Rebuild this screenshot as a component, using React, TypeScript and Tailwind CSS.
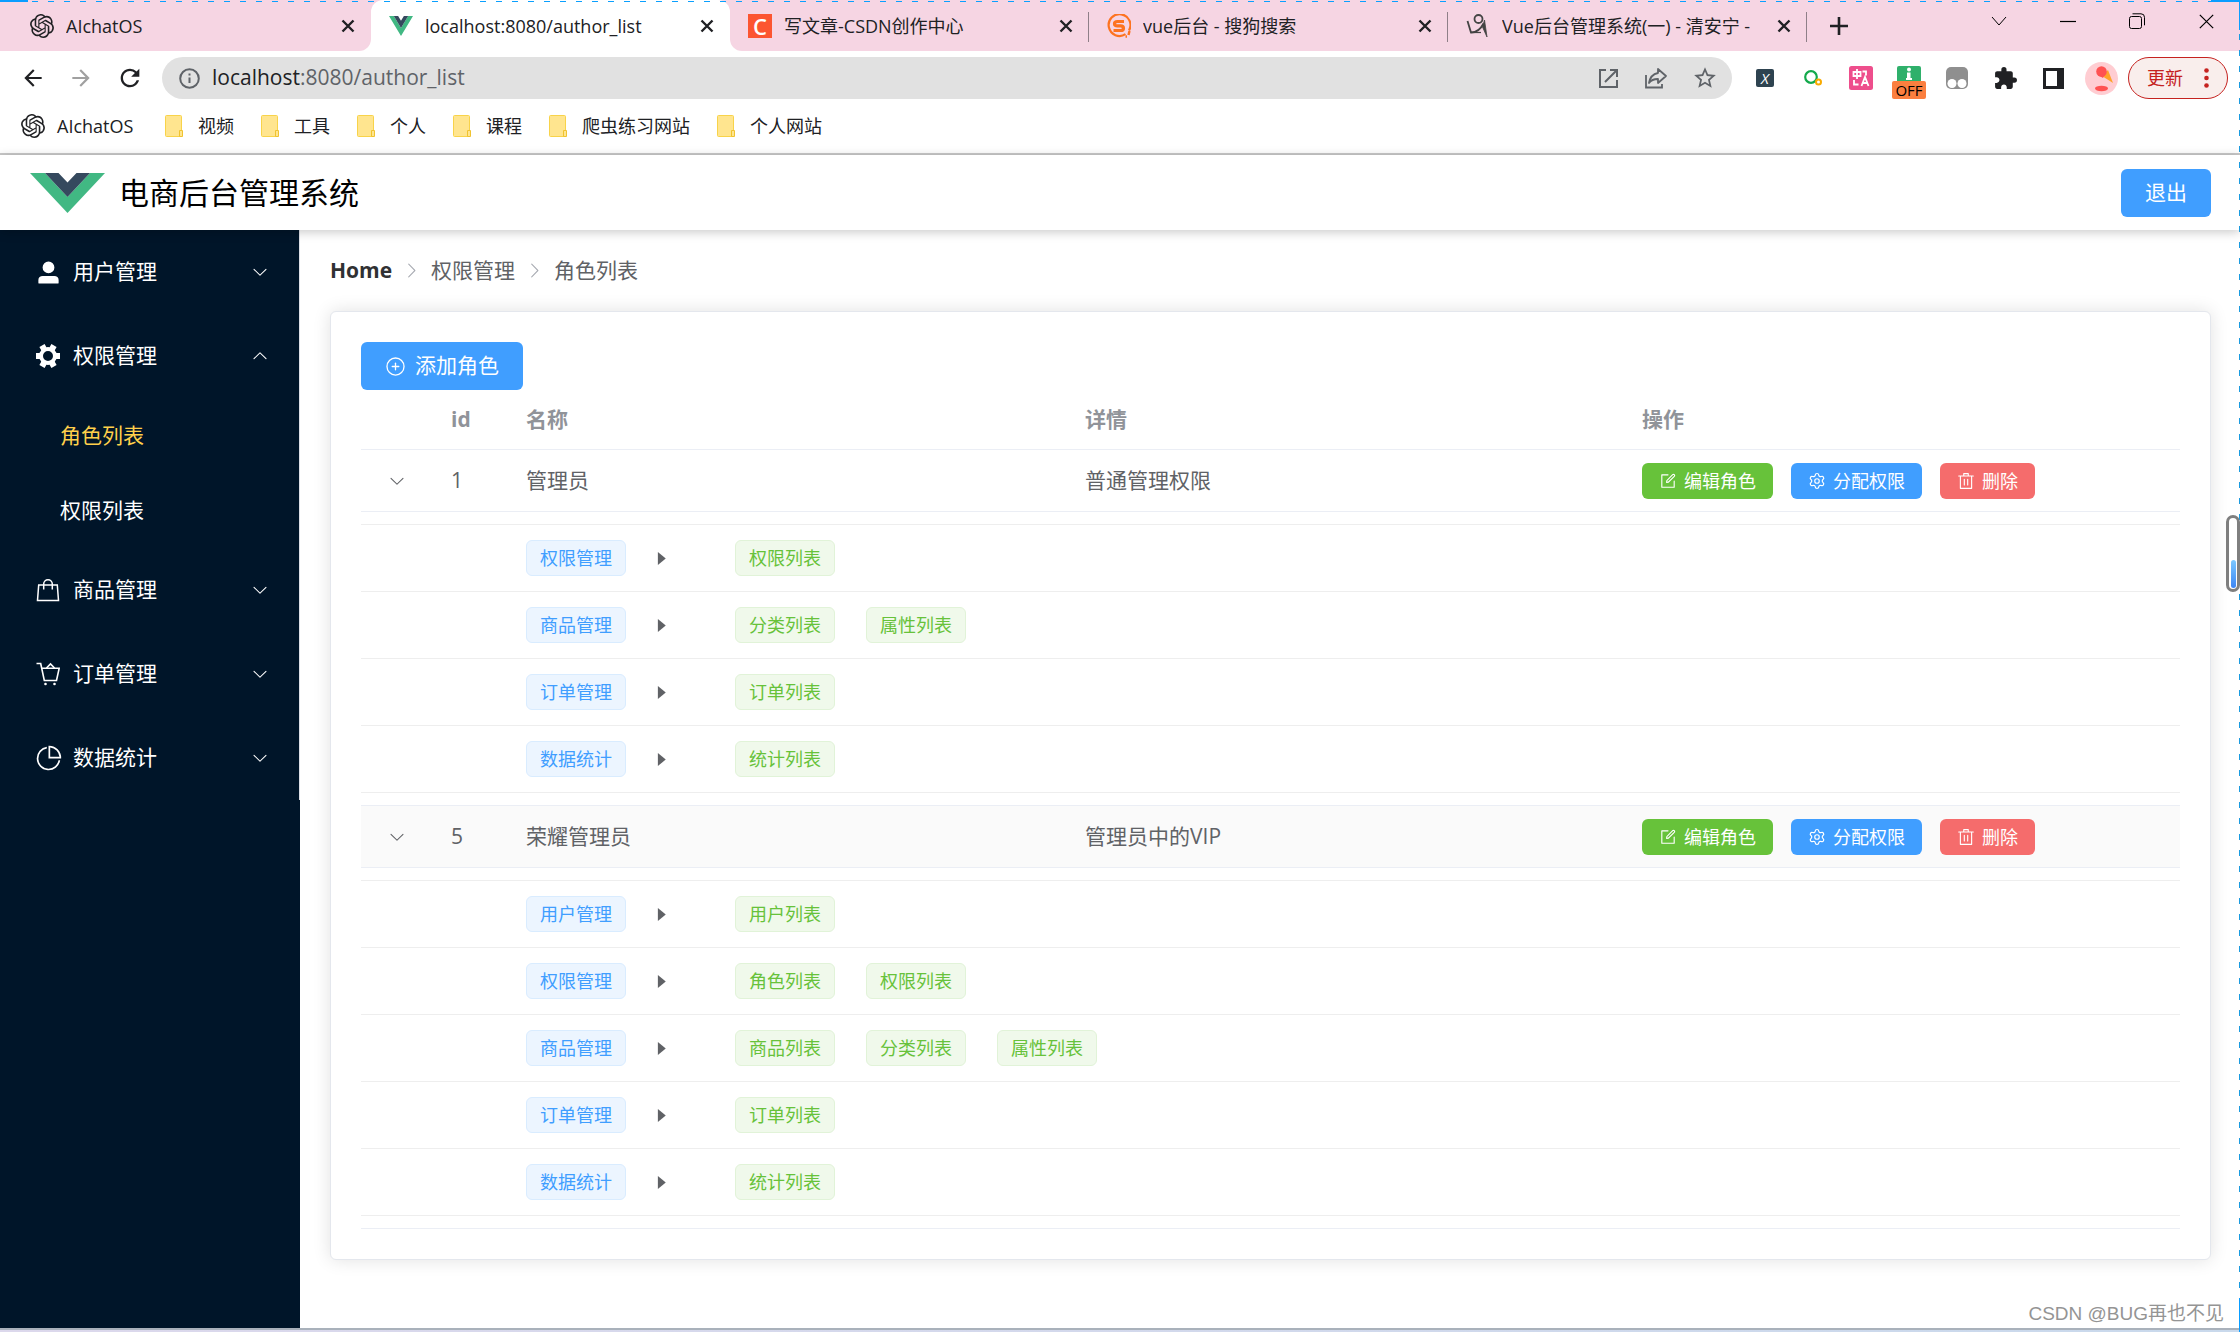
import React from "react";
import { SiOpenai } from "react-icons/si";
import { MdArrowBack, MdArrowForward, MdExtension, MdRefresh, MdStarBorder } from "react-icons/md";
import { Settings } from "lucide-react";

const PATHS = {
  arrowDown: [
    "M831.872 340.864 512 652.672 192.128 340.864a30.592 30.592 0 0 0-42.752 0 29.12 29.12 0 0 0 0 41.6L489.664 714.24a32 32 0 0 0 44.672 0l340.288-331.712a29.12 29.12 0 0 0 0-41.728 30.592 30.592 0 0 0-42.752 0z",
  ],
  circlePlus: [
    "M352 480h320a32 32 0 1 1 0 64H352a32 32 0 0 1 0-64z",
    "M480 672V352a32 32 0 1 1 64 0v320a32 32 0 0 1-64 0z",
    "M512 896a384 384 0 1 0 0-768 384 384 0 0 0 0 768zm0 64a448 448 0 1 1 0-896 448 448 0 0 1 0 896z",
  ],
  remove: [
    "M160 256H96a32 32 0 0 1 0-64h256V95.936a32 32 0 0 1 32-32h256a32 32 0 0 1 32 32V192h256a32 32 0 1 1 0 64h-64v672a32 32 0 0 1-32 32H192a32 32 0 0 1-32-32V256zm448-64v-64H416v64h192zM224 896h576V256H224v640zm192-128a32 32 0 0 1-32-32V416a32 32 0 0 1 64 0v320a32 32 0 0 1-32 32zm192 0a32 32 0 0 1-32-32V416a32 32 0 0 1 64 0v320a32 32 0 0 1-32 32z",
  ],
  edit: [
    "M832 512a32 32 0 1 1 64 0v352a32 32 0 0 1-32 32H160a32 32 0 0 1-32-32V160a32 32 0 0 1 32-32h352a32 32 0 0 1 0 64H192v640h640V512z",
    "m469.952 554.24 52.8-7.552L847.104 222.4a32 32 0 1 0-45.248-45.248L477.44 501.44l-7.552 52.8zm422.4-422.4a96 96 0 0 1 0 135.808l-331.84 331.84a32 32 0 0 1-18.112 9.088L436.8 623.68a32 32 0 0 1-36.224-36.224l15.104-105.6a32 32 0 0 1 9.024-18.112l331.904-331.84a96 96 0 0 1 135.744 0z",
  ],
  caretRight: ["M384 192v640l384-320.064z"],
  user: [
    "M288 320a224 224 0 1 0 448 0 224 224 0 1 0-448 0zm544 608H160a32 32 0 0 1-32-32v-96a160 160 0 0 1 160-160h448a160 160 0 0 1 160 160v96a32 32 0 0 1-32 32z",
  ],
  pie: [
    "M448 68.48v64.832A384.128 384.128 0 0 0 512 896a384.128 384.128 0 0 0 378.688-320h64.768A448.128 448.128 0 0 1 64 512 448.128 448.128 0 0 1 448 68.48z",
    "M576 97.28V448h350.72A384.064 384.064 0 0 0 576 97.28zM512 64V33.152A448 448 0 0 1 990.848 512H512V64z",
  ],
};

function Glyph({ name, className }: { name: keyof typeof PATHS; className: string }) {
  return (
    <svg viewBox="0 0 1024 1024" fill="currentColor" className={className} aria-hidden="true">
      {PATHS[name].map((d) => (
        <path key={d} d={d} />
      ))}
    </svg>
  );
}

function VueLogo({ className }: { className: string }) {
  return (
    <svg viewBox="0 0 75 40" preserveAspectRatio="none" className={className} aria-hidden="true">
      <path d="M0 0h15l22.5 24L60 0h15L37.5 40z" fill="#41b883" />
      <path d="M15 0h13.5l9 9.5 9-9.5H60L37.500 24z" fill="#35495e" />
    </svg>
  );
}

function Cross({ className }: { className: string }) {
  return (
    <svg viewBox="0 0 14 14" fill="none" stroke="currentColor" className={className} aria-hidden="true">
      <path d="M1.500 1.500l11 11M12.500 1.500l-11 11" />
    </svg>
  );
}

/* ---------- browser chrome ---------- */

function SogouIcon() {
  return (
    <svg viewBox="0 0 24 24" fill="none" stroke="#fd7320" className="size-6 shrink-0" aria-hidden="true">
      <path d="M18.500 20.200A10.900 10.900 0 1 1 22 16.500" strokeWidth="2.200" />
      <path d="M17 7.500H10.500c-4 0-4 4.300 0 4.300h3c4 0 4 4.700 0 4.700H6.500" strokeWidth="3.200" />
      <path d="M22.500 17l-1 4M18.500 22.500h1.500" strokeWidth="2.400" />
    </svg>
  );
}

function FigureIcon() {
  return (
    <svg viewBox="0 0 24 24" fill="none" stroke="#444" className="size-6 shrink-0" aria-hidden="true">
      <circle cx="12.500" cy="5" r="4" strokeWidth="1.800" />
      <path d="M1.500 7l3.500 11.500c4.500 0 9-2 12.500-9" strokeWidth="1.800" />
      <path d="M5 18.500h10" strokeWidth="1.200" />
      <path d="M18.500 6l2.500 17-4.500-10z" strokeWidth="0.800" fill="#444" />
    </svg>
  );
}

const TABS = [
  { title: "AIchatOS", icon: <SiOpenai className="size-6 shrink-0" />, active: false, line: false },
  {
    title: "localhost:8080/author_list",
    icon: <VueLogo className="h-5 w-6 shrink-0" />,
    active: true,
    line: false,
  },
  {
    title: "写文章-CSDN创作中心",
    icon: (
      <span className="flex size-6 shrink-0 items-center justify-center bg-[#fc5531] text-[22px] leading-6 font-semibold text-white">
        C
      </span>
    ),
    active: false,
    line: true,
  },
  { title: "vue后台 - 搜狗搜索", icon: <SogouIcon />, active: false, line: true },
  { title: "Vue后台管理系统(一) - 清安宁 - ", icon: <FigureIcon />, active: false, line: true },
];

function TabStrip() {
  return (
    <div className="flex h-[51px] bg-[#f6d5e3] pl-3 text-[#202124]">
      {TABS.map((t) => (
        <div
          key={t.title}
          className={
            t.active
              ? "relative flex w-[359px] items-center gap-3 rounded-t-xl bg-white pr-4 pl-[18px]"
              : "relative flex w-[359px] items-center gap-3 pr-4 pl-[18px]"
          }
        >
          {t.active && (
            <>
              <span className="absolute bottom-0 -left-3 size-3 bg-white">
                <span className="block size-3 rounded-br-xl bg-[#f6d5e3]" />
              </span>
              <span className="absolute -right-3 bottom-0 size-3 bg-white">
                <span className="block size-3 rounded-bl-xl bg-[#f6d5e3]" />
              </span>
            </>
          )}
          {t.icon}
          <span className="min-w-0 flex-1 overflow-hidden text-lg leading-6 whitespace-nowrap">{t.title}</span>
          <button aria-label="关闭标签页" className="shrink-0">
            <Cross className="size-3.5 stroke-[2.4]" />
          </button>
          {t.line && <span className="absolute top-3 right-0 h-[30px] w-px bg-[#8f7f88]" />}
        </div>
      ))}
      <button aria-label="新标签页" className="ml-[23px] flex items-center">
        <svg viewBox="0 0 18 18" stroke="currentColor" strokeWidth="2.600" className="size-[18px]" aria-hidden="true">
          <path d="M9 0v18M0 9h18" />
        </svg>
      </button>
      <div className="ml-auto flex h-[42px] items-center gap-[53px] pr-[25px] text-black">
        <button aria-label="搜索标签页">
          <svg viewBox="0 0 16 16" fill="none" stroke="currentColor" className="size-4" aria-hidden="true">
            <path d="M1 4l7 8 7-8" />
          </svg>
        </button>
        <button aria-label="最小化">
          <svg viewBox="0 0 16 16" stroke="currentColor" className="size-4" aria-hidden="true">
            <path d="M0 8.500h16" strokeWidth="1.200" />
          </svg>
        </button>
        <button aria-label="还原">
          <svg viewBox="0 0 16 16" fill="none" stroke="currentColor" className="size-4" aria-hidden="true">
            <rect x="0.500" y="3.500" width="12" height="12" rx="2" />
            <path d="M3.500.8h8.500a3.500 3.500 0 0 1 3.500 3.500v8" />
          </svg>
        </button>
        <button aria-label="关闭">
          <Cross className="size-[17px] stroke-1" />
        </button>
      </div>
    </div>
  );
}

function ExtensionCell({ label, children }: { label: string; children: React.ReactNode }) {
  return (
    <button aria-label={label} className="flex h-[42px] w-12 items-center justify-center">
      {children}
    </button>
  );
}

function Toolbar() {
  return (
    <div className="flex items-center pt-1.5 pr-3 pl-5">
      <div className="flex w-[142px] items-center gap-[22px] text-[#202124]">
        <button aria-label="后退">
          <MdArrowBack className="size-[26px]" />
        </button>
        <button aria-label="前进" className="text-[#a0a0a0]">
          <MdArrowForward className="size-[26px]" />
        </button>
        <button aria-label="刷新">
          <MdRefresh className="size-7" />
        </button>
      </div>
      <div className="flex h-[42px] min-w-0 flex-1 items-center rounded-full bg-[#e1e1e1] pr-3.5 pl-[17px] text-[#5f6368]">
        <svg viewBox="0 0 21 21" fill="none" stroke="currentColor" strokeWidth="2" className="size-[21px]" aria-hidden="true">
          <circle cx="10.500" cy="10.500" r="9.300" />
          <path d="M10.500 9.500v5.500M10.500 5.500v2" />
        </svg>
        <div className="ml-3 text-[21px] whitespace-nowrap">
          <span className="text-[#202124]">localhost</span>:8080/author_list
        </div>
        <div className="ml-auto flex items-center gap-6">
          <button aria-label="在应用中打开">
            <svg viewBox="0 0 24 24" fill="none" stroke="currentColor" strokeWidth="2" className="size-6" aria-hidden="true">
              <path d="M10 4H4v17h17v-7M14 4h7v7M21 4L9 16" />
            </svg>
          </button>
          <button aria-label="分享">
            <svg viewBox="0 0 24 24" fill="none" stroke="currentColor" strokeWidth="1.800" className="size-6" aria-hidden="true">
              <path d="M2 9v12.500h16V18" />
              <path d="M14 3l8 7-8 7v-4c-4 0-7 1-9 4 1-6 4-9 9-10z" strokeLinejoin="round" />
            </svg>
          </button>
          <button aria-label="收藏">
            <MdStarBorder className="size-[26px]" />
          </button>
        </div>
      </div>
      <div className="ml-[9px] flex">
        <ExtensionCell label="X">
          <span className="flex size-[18px] items-center justify-center rounded-xs bg-[#2e4350] text-[15px] text-white italic">
            X
          </span>
        </ExtensionCell>
        <ExtensionCell label="搜索助手">
          <svg viewBox="0 0 20 18" fill="none" className="h-[18px] w-5" aria-hidden="true">
            <circle cx="8" cy="8" r="5.800" stroke="#13a94b" strokeWidth="2.200" />
            <circle cx="15.500" cy="13" r="2.500" stroke="#f9ab00" strokeWidth="2" />
          </svg>
        </ExtensionCell>
        <ExtensionCell label="翻译">
          <svg viewBox="0 0 24 24" fill="none" stroke="#fff" strokeWidth="1.800" className="size-6" aria-hidden="true">
            <rect width="24" height="24" rx="2.500" fill="#ee4e8c" stroke="none" />
            <path d="M4.500 6h7v4h-7zM8 3v10M13.500 5.500h3.500v4M5 14v4.500h4.500M12.500 20l3.500-9 3.500 9M14 17h4" />
          </svg>
        </ExtensionCell>
        <ExtensionCell label="广告拦截">
          <span className="flex flex-col items-center pt-2">
            <span className="flex h-[15px] w-6 justify-center rounded-t-xs bg-[#2fb06b]">
              <svg viewBox="0 0 8 14" fill="#fff" className="h-3.5 w-2" aria-hidden="true">
                <circle cx="4" cy="3.500" r="2" />
                <path d="M2 6.500h3.500V12H7v2H1v-2h1z" />
              </svg>
            </span>
            <span className="rounded-xs bg-[#fb7f3f] px-[3px] text-[15px] leading-[18px] text-black">OFF</span>
          </span>
        </ExtensionCell>
        <ExtensionCell label="脚本管理">
          <svg viewBox="0 0 22 22" className="size-[22px]" aria-hidden="true">
            <rect width="22" height="22" rx="5" fill="#8f8f8f" />
            <circle cx="6" cy="16.500" r="4.500" fill="#fff" />
            <circle cx="16" cy="16.500" r="4.500" fill="#fff" />
          </svg>
        </ExtensionCell>
        <ExtensionCell label="扩展程序">
          <MdExtension className="size-[25px] text-[#202124]" />
        </ExtensionCell>
        <ExtensionCell label="侧边栏">
          <svg viewBox="0 0 21 21" className="size-[21px]" aria-hidden="true">
            <path d="M0 0h21v21H0zM3 3v15h11V3z" fill="#202124" fillRule="evenodd" />
          </svg>
        </ExtensionCell>
        <ExtensionCell label="用户">
          <svg viewBox="0 0 33 33" className="size-[33px]" aria-hidden="true">
            <circle cx="16.500" cy="16.500" r="16.500" fill="#ffcdd2" />
            <path d="M17 14l6-6 5 13z" fill="#ffa32b" />
            <circle cx="16.500" cy="9.500" r="5.300" fill="#ff5252" />
            <path d="M13 13l5 3 2-4z" fill="#ff5252" />
            <ellipse cx="16.500" cy="26.500" rx="6.500" ry="2.700" fill="#ff5252" />
          </svg>
        </ExtensionCell>
      </div>
      <button className="ml-[3px] flex h-[42px] w-[100px] items-center justify-between rounded-full border border-[#c5221f] bg-[#f9eeec] pr-[18px] pl-[18px] text-lg text-[#c5221f]">
        更新
        <svg viewBox="0 0 5 20" fill="currentColor" className="h-5 w-[5px]" aria-hidden="true">
          <circle cx="2.500" cy="2.500" r="2.300" />
          <circle cx="2.500" cy="10" r="2.300" />
          <circle cx="2.500" cy="17.500" r="2.300" />
        </svg>
      </button>
    </div>
  );
}

const BOOKMARKS = ["视频", "工具", "个人", "课程", "爬虫练习网站", "个人网站"];

function Bookmarks() {
  return (
    <nav className="flex h-14 items-center gap-[27px] border-b-2 border-[#c9c9c9] pl-[21px] text-lg text-[#202124]">
      <a href="#" className="flex items-center gap-3">
        <SiOpenai className="size-6" />
        <span className="w-[81px]">AIchatOS</span>
      </a>
      {BOOKMARKS.map((b) => (
        <a key={b} href="#" className="flex items-center gap-[15px]">
          <svg viewBox="0 0 18 22" className="h-[22px] w-[18px]" aria-hidden="true">
            <rect x="0.500" y="0.500" width="16" height="21" rx="1" fill="#ffe58f" stroke="#f8d34a" />
            <path d="M14.500 21.500v-6h3v6z" fill="#ffe58f" stroke="#f0c330" />
          </svg>
          {b}
        </a>
      ))}
    </nav>
  );
}

/* ---------- application ---------- */

function AppHeader() {
  return (
    <header className="relative z-10 flex h-[75px] items-center bg-white pr-[29px] pl-[30px] shadow-[0_2px_10px_rgba(0,0,0,0.22)]">
      <VueLogo className="h-10 w-[75px]" />
      <h1 className="ml-3.5 text-3xl text-black">电商后台管理系统</h1>
      <button className="ml-auto h-12 rounded-md bg-[#409eff] px-6 text-[21px] text-white">退出</button>
    </header>
  );
}

function GearIcon() {
  return (
    <svg viewBox="0 0 24 24" className="size-6" fill="none" stroke="currentColor" aria-hidden="true">
      <circle cx="12" cy="12" r="7" strokeWidth="4" />
      <g strokeWidth="6">
        <path d="M0 12h5M19 12h5" />
        <path d="M0 12h5M19 12h5" transform="rotate(60 12 12)" />
        <path d="M0 12h5M19 12h5" transform="rotate(120 12 12)" />
      </g>
    </svg>
  );
}

function BagIcon() {
  return (
    <svg viewBox="0 0 24 24" className="size-6" fill="none" stroke="currentColor" strokeWidth="1.500" aria-hidden="true">
      <path d="M2.700 7h18.600l1.200 15.500h-21z" />
      <path d="M7.700 11.500V6a4.300 4.300 0 0 1 8.600 0v5.500" />
    </svg>
  );
}

function CartIcon() {
  return (
    <svg viewBox="0 0 24 24" className="size-6" fill="none" stroke="currentColor" strokeWidth="1.600" aria-hidden="true">
      <path d="M.5 1.500h4.200l3.600 17h12.200l2.700-12.300H6" />
      <path d="M10.500 6l4-4 4 4" />
      <circle cx="9.500" cy="22" r="1.300" fill="currentColor" stroke="none" />
      <circle cx="18.500" cy="22" r="1.300" fill="currentColor" stroke="none" />
    </svg>
  );
}

const MENU = [
  { label: "用户管理", icon: <Glyph name="user" className="size-[27px]" />, children: [] },
  { label: "权限管理", icon: <GearIcon />, children: ["角色列表", "权限列表"] },
  { label: "商品管理", icon: <BagIcon />, children: [] },
  { label: "订单管理", icon: <CartIcon />, children: [] },
  { label: "数据统计", icon: <Glyph name="pie" className="size-[27px]" />, children: [] },
];

function Sidebar() {
  return (
    <aside className="w-[300px] shrink-0 bg-[#001529] text-[21px] text-white">
      <nav className="border-r border-[#dcdfe6]">
        {MENU.map((m) => (
          <div key={m.label}>
            <button className="flex h-[84px] w-full items-center pr-[30px] pl-[30px]">
              <span className="flex w-9 justify-center">{m.icon}</span>
              <span className="ml-[7px]">{m.label}</span>
              <Glyph
                name="arrowDown"
                className={m.children.length ? "ml-auto size-[18px] rotate-180" : "ml-auto size-[18px]"}
              />
            </button>
            {m.children.map((c, i) => (
              <a
                key={c}
                href="#"
                className={
                  i === 0 ? "flex h-[75px] items-center pl-[60px] text-[#ffd04b]" : "flex h-[75px] items-center pl-[60px]"
                }
              >
                {c}
              </a>
            ))}
          </div>
        ))}
      </nav>
    </aside>
  );
}

function Breadcrumb() {
  return (
    <nav className="flex h-[21px] items-center text-[21px] leading-[21px] text-[#606266]">
      <a href="#" className="font-bold text-[#303133]">
        Home
      </a>
      <Glyph name="arrowDown" className="mx-2.5 size-[19px] -rotate-90 text-[#a8abb2]" />
      <span>权限管理</span>
      <Glyph name="arrowDown" className="mx-2.5 size-[19px] -rotate-90 text-[#a8abb2]" />
      <span>角色列表</span>
    </nav>
  );
}

const ROLES = [
  {
    id: 1,
    name: "管理员",
    desc: "普通管理权限",
    hovered: false,
    rights: [
      { group: "权限管理", items: ["权限列表"] },
      { group: "商品管理", items: ["分类列表", "属性列表"] },
      { group: "订单管理", items: ["订单列表"] },
      { group: "数据统计", items: ["统计列表"] },
    ],
  },
  {
    id: 5,
    name: "荣耀管理员",
    desc: "管理员中的VIP",
    hovered: true,
    rights: [
      { group: "用户管理", items: ["用户列表"] },
      { group: "权限管理", items: ["角色列表", "权限列表"] },
      { group: "商品管理", items: ["商品列表", "分类列表", "属性列表"] },
      { group: "订单管理", items: ["订单列表"] },
      { group: "数据统计", items: ["统计列表"] },
    ],
  },
];

function RoleRows({ role }: { role: (typeof ROLES)[number] }) {
  return (
    <>
      <tr className={role.hovered ? "h-[62px] bg-[#fafafa]" : "h-[62px]"}>
        <td className="border-b border-[#ebeef5]">
          <button aria-label="展开" className="mx-auto block">
            <Glyph name="arrowDown" className="size-[18px]" />
          </button>
        </td>
        <td className="border-b border-[#ebeef5] px-[18px]">{role.id}</td>
        <td className="border-b border-[#ebeef5] px-[18px]">{role.name}</td>
        <td className="border-b border-[#ebeef5] px-[18px]">{role.desc}</td>
        <td className="border-b border-[#ebeef5] px-[18px]">
          <div className="flex gap-[18px] text-lg text-white">
            <button className="flex h-9 items-center gap-[7px] rounded-md bg-[#67c23a] px-[17px]">
              <Glyph name="edit" className="size-[18px]" />
              编辑角色
            </button>
            <button className="flex h-9 items-center gap-[7px] rounded-md bg-[#409eff] px-[17px]">
              <Settings className="size-[18px] stroke-[1.6]" />
              分配权限
            </button>
            <button className="flex h-9 items-center gap-[7px] rounded-md bg-[#f56c6c] px-[17px]">
              <Glyph name="remove" className="size-[18px]" />
              删除
            </button>
          </div>
        </td>
      </tr>
      <tr>
        <td colSpan={5} className="border-b border-[#ebeef5] py-3">
          <ul className="border-t border-[#eee] text-lg leading-none">
            {role.rights.map((r) => (
              <li key={r.group} className="flex h-[67px] items-center border-b border-[#eee] pl-[165px]">
                <span className="flex h-9 items-center rounded-md border border-[#d9ecff] bg-[#ecf5ff] px-[13px] text-[#409eff]">
                  {r.group}
                </span>
                <span className="flex w-[109px] pl-6">
                  <Glyph name="caretRight" className="size-[21px]" />
                </span>
                <span className="flex gap-[31px]">
                  {r.items.map((t) => (
                    <span
                      key={t}
                      className="flex h-9 items-center rounded-md border border-[#e1f3d8] bg-[#f0f9eb] px-[13px] text-[#67c23a]"
                    >
                      {t}
                    </span>
                  ))}
                </span>
              </li>
            ))}
          </ul>
        </td>
      </tr>
    </>
  );
}

function RoleCard() {
  return (
    <section className="mt-[30px] rounded-md border border-[#e4e7ed] bg-white p-[30px] shadow-[0_0_18px_rgba(0,0,0,0.12)]">
      <button className="flex h-12 items-center gap-[9px] rounded-md bg-[#409eff] px-6 text-[21px] text-white">
        <Glyph name="circlePlus" className="size-[21px]" />
        添加角色
      </button>
      <table className="w-full table-fixed border-separate border-spacing-0 text-left text-[21px] text-[#606266]">
        <colgroup>
          <col className="w-[72px]" />
          <col className="w-[75px]" />
          <col className="w-[559px]" />
          <col className="w-[557px]" />
          <col />
        </colgroup>
        <thead>
          <tr className="h-[60px] text-[#909399]">
            <th className="border-b border-[#ebeef5]" aria-label="展开" />
            <th className="border-b border-[#ebeef5] px-[18px]">id</th>
            <th className="border-b border-[#ebeef5] px-[18px]">名称</th>
            <th className="border-b border-[#ebeef5] px-[18px]">详情</th>
            <th className="border-b border-[#ebeef5] px-[18px]">操作</th>
          </tr>
        </thead>
        <tbody>
          {ROLES.map((r) => (
            <RoleRows key={r.id} role={r} />
          ))}
        </tbody>
      </table>
    </section>
  );
}

/* Dashed capture frame and the floating scroll handle above the window. */
function Overlays() {
  return (
    <div className="pointer-events-none absolute inset-0 z-20" aria-hidden="true">
      <div className="absolute inset-x-0 top-px h-px bg-[repeating-linear-gradient(90deg,#0aa0ff_0_6px,transparent_6px_16px)]" />
      <div className="absolute top-0 left-0 h-0.5 w-7 bg-[#0a9dff]" />
      <div className="absolute top-0 right-0 h-0.5 w-[29px] bg-[#0a9dff]" />
      <div className="absolute inset-y-0 right-0 w-px bg-[repeating-linear-gradient(180deg,transparent_0_2px,#1a9be0_2px_8px,transparent_8px_16px)]" />
      <div className="absolute top-0 right-0 h-[30px] w-px bg-[#0a9dff]" />
      <div className="absolute right-0 bottom-0 h-[34px] w-px bg-[#0a9dff]" />
      <div className="absolute top-[515px] right-0 flex h-[77px] w-3.5 flex-col items-center justify-end rounded-full border-[3px] border-[#7f7f7f] bg-white pb-px">
        <div className="h-7 w-[5px] rounded-full bg-linear-to-b from-[#7cc8ff] to-[#3d86f5]" />
      </div>
    </div>
  );
}

export default function App() {
  return (
    <div className="relative flex min-h-screen flex-col overflow-hidden bg-white font-['Open_Sans','Noto_Sans_CJK_SC',sans-serif]">
      <TabStrip />
      <Toolbar />
      <Bookmarks />
      <AppHeader />
      <div className="flex flex-1">
        <Sidebar />
        <main className="min-w-0 flex-1 py-[30px] pr-[29px] pl-[30px]">
          <Breadcrumb />
          <RoleCard />
        </main>
      </div>
      <footer className="h-1 border-t-2 border-[#a9b1bb] bg-linear-to-r from-[#dcd8ec] to-[#c9d9ec]" />
      <p className="absolute right-4 bottom-1.5 font-['Liberation_Sans','Noto_Sans_CJK_SC',sans-serif] text-[19px] leading-6 text-[#949494]">
        CSDN @BUG再也不见
      </p>
      <Overlays />
    </div>
  );
}
